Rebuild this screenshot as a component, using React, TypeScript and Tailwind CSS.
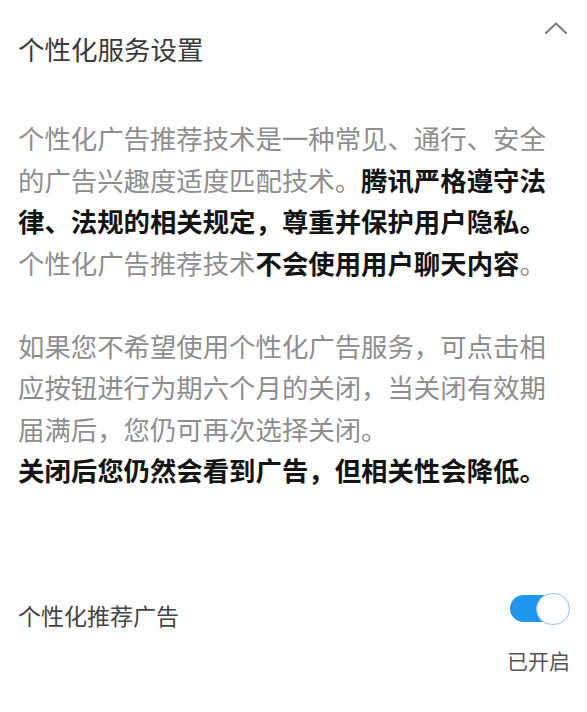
import React from "react";

export default function App() {
  const font = { fontFamily: '"Noto Sans CJK SC", "Noto Sans", sans-serif' };
  return (
    <div className="w-[587px] h-[712px] bg-white overflow-hidden" style={font}>
      <div className="flex justify-between items-start pl-[18px]">
        <div className="mt-[28px] text-[26.5px] leading-[41px] text-[#3a3a3a]">个性化服务设置</div>
        <svg className="mt-[21px] mr-[19px]" width="24" height="14" viewBox="0 0 24 14" fill="none">
          <path d="M2 12 L12 2.5 L22 12" stroke="#7a7a7a" strokeWidth="2" strokeLinecap="round" strokeLinejoin="round" />
        </svg>
      </div>

      <div className="pl-[18px] pr-[10px] mt-[48px] text-[26.4px] leading-[41.5px] text-[#8e8e8e]">
        <p>
          个性化广告推荐技术是一种常见、通行、安全
          <br />
          的广告兴趣度适度匹配技术。
          <span className="font-bold text-[#141414]">腾讯严格遵守法</span>
          <br />
          <span className="font-bold text-[#141414]">律、法规的相关规定，尊重并保护用户隐私。</span>
          <br />
          个性化广告推荐技术<span className="font-bold text-[#141414]">不会使用用户聊天内容</span>。
        </p>
        <p className="mt-[41.5px]">
          如果您不希望使用个性化广告服务，可点击相
          <br />
          应按钮进行为期六个月的关闭，当关闭有效期
          <br />
          届满后，您仍可再次选择关闭。
          <br />
          <span className="font-bold text-[#141414]">关闭后您仍然会看到广告，但相关性会降低。</span>
        </p>
      </div>

      <div className="flex justify-between items-start pl-[18px] pr-[17px] mt-[102px]">
        <div className="mt-[6px] text-[23px] leading-[32px] text-[#444444]">个性化推荐广告</div>
        <div className="flex flex-col items-end">
          <div className="relative w-[60px] h-[32px] flex items-center">
            <div className="w-[54px] h-[27px] rounded-full bg-[#1f97ee]" />
            <div className="absolute right-0 top-0 w-[34px] h-[32px] rounded-full bg-white border-[1.5px] border-[#86c8f4]" />
          </div>
          <div className="mt-[21px] text-[21px] leading-[28px] text-[#555555]">已开启</div>
        </div>
      </div>
    </div>
  );
}
